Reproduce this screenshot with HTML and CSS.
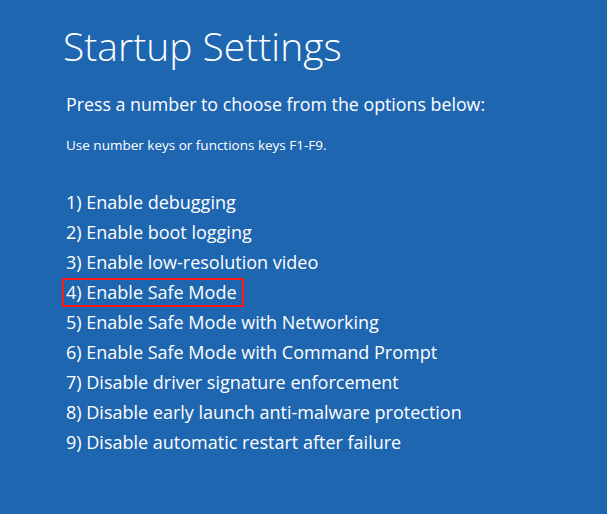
FILE: index.html
```html
<!DOCTYPE html>
<html lang="en">
<head>
    <meta charset="UTF-8">
    <title>Startup Settings</title>
    <link rel="stylesheet" href="styles.css">
</head>
<body>
<div class="screen">
    <h1 class="title">Startup Settings</h1>
    <p class="prompt">Press a number to choose from the options below:</p>
    <p class="hint">Use number keys or functions keys F1-F9.</p>

    <ul class="options">
        <li>1) Enable debugging</li>
        <li>2) Enable boot logging</li>
        <li>3) Enable low-resolution video</li>
        <li><span class="marked">4) Enable Safe Mode</span></li>
        <li>5) Enable Safe Mode with Networking</li>
        <li>6) Enable Safe Mode with Command Prompt</li>
        <li>7) Disable driver signature enforcement</li>
        <li>8) Disable early launch anti-malware protection</li>
        <li>9) Disable automatic restart after failure</li>
    </ul>
</div>
</body>
</html>
```

FILE: styles.css
```css
* {
    margin: 0;
    padding: 0;
    box-sizing: border-box;
}

html, body {
    height: 100%;
}

body {
    font-family: 'Open Sans', 'Noto Sans', sans-serif;
    background-color: #1f66b1;
    color: #fff;
}

.screen {
    padding: 20px 0 0 66px;
}

.title {
    font-size: 39px;
    font-weight: 300;
    line-height: 52px;
    margin-left: -3px;
}

.prompt {
    font-size: 17.8px;
    line-height: 24px;
    margin-top: 20px;
}

.hint {
    font-size: 13.5px;
    line-height: 18px;
    margin-top: 20px;
}

.options {
    list-style: none;
    margin-top: 33px;
}

.options li {
    font-size: 18px;
    line-height: 30px;
}

.marked {
    display: inline-block;
    vertical-align: top;
    line-height: 25px;
    padding: 0 5px 0 2px;
    margin: 1px 0 0 -4px;
    border: 2px solid #ff1a1a;
}
```
